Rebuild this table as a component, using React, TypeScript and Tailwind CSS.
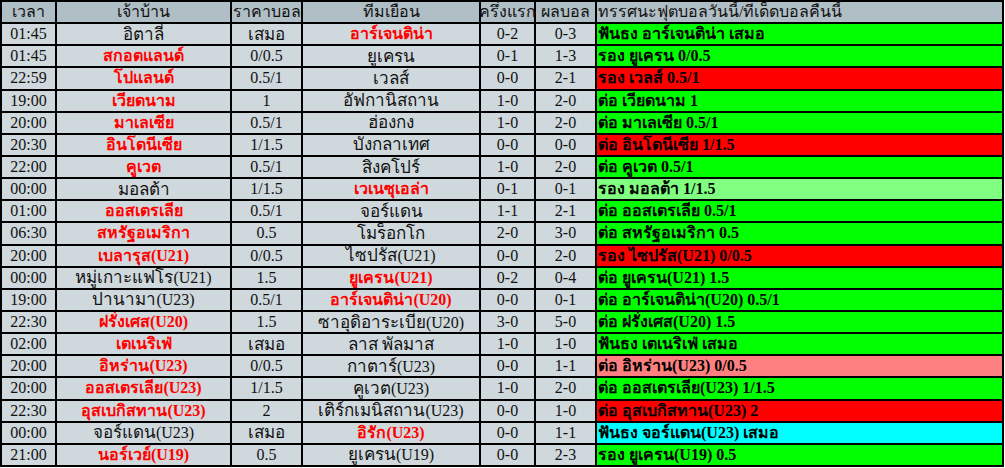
type Row = {
  time: string;
  home: string;
  homeRed?: boolean;
  odds: string;
  away: string;
  awayRed?: boolean;
  half: string;
  full: string;
  tip: string;
  tone: "green" | "red" | "lime" | "pink" | "cyan";
};

const rows: Row[] = [
  { time: "01:45", home: "อิตาลี่", odds: "เสมอ", away: "อาร์เจนติน่า", awayRed: true, half: "0-2", full: "0-3", tip: "ฟันธง อาร์เจนติน่า เสมอ", tone: "green" },
  { time: "01:45", home: "สกอตแลนด์", homeRed: true, odds: "0/0.5", away: "ยูเครน", half: "0-1", full: "1-3", tip: "รอง ยูเครน 0/0.5", tone: "green" },
  { time: "22:59", home: "โปแลนด์", homeRed: true, odds: "0.5/1", away: "เวลส์", half: "0-0", full: "2-1", tip: "รอง เวลส์ 0.5/1", tone: "red" },
  { time: "19:00", home: "เวียดนาม", homeRed: true, odds: "1", away: "อัฟกานิสถาน", half: "1-0", full: "2-0", tip: "ต่อ เวียดนาม 1", tone: "green" },
  { time: "20:00", home: "มาเลเซีย", homeRed: true, odds: "0.5/1", away: "ฮ่องกง", half: "1-0", full: "2-0", tip: "ต่อ มาเลเซีย 0.5/1", tone: "green" },
  { time: "20:30", home: "อินโดนีเซีย", homeRed: true, odds: "1/1.5", away: "บังกลาเทศ", half: "0-0", full: "0-0", tip: "ต่อ อินโดนีเซีย 1/1.5", tone: "red" },
  { time: "22:00", home: "คูเวต", homeRed: true, odds: "0.5/1", away: "สิงคโปร์", half: "1-0", full: "2-0", tip: "ต่อ คูเวต 0.5/1", tone: "green" },
  { time: "00:00", home: "มอลต้า", odds: "1/1.5", away: "เวเนซุเอล่า", awayRed: true, half: "0-1", full: "0-1", tip: "รอง มอลต้า 1/1.5", tone: "lime" },
  { time: "01:00", home: "ออสเตรเลีย", homeRed: true, odds: "0.5/1", away: "จอร์แดน", half: "1-1", full: "2-1", tip: "ต่อ ออสเตรเลีย 0.5/1", tone: "green" },
  { time: "06:30", home: "สหรัฐอเมริกา", homeRed: true, odds: "0.5", away: "โมร็อกโก", half: "2-0", full: "3-0", tip: "ต่อ สหรัฐอเมริกา 0.5", tone: "green" },
  { time: "20:00", home: "เบลารุส(U21)", homeRed: true, odds: "0/0.5", away: "ไซปรัส(U21)", half: "0-0", full: "2-0", tip: "รอง ไซปรัส(U21) 0/0.5", tone: "red" },
  { time: "00:00", home: "หมู่เกาะแฟโร(U21)", odds: "1.5", away: "ยูเครน(U21)", awayRed: true, half: "0-2", full: "0-4", tip: "ต่อ ยูเครน(U21) 1.5", tone: "green" },
  { time: "19:00", home: "ปานามา(U23)", odds: "0.5/1", away: "อาร์เจนติน่า(U20)", awayRed: true, half: "0-0", full: "0-1", tip: "ต่อ อาร์เจนติน่า(U20) 0.5/1", tone: "green" },
  { time: "22:30", home: "ฝรั่งเศส(U20)", homeRed: true, odds: "1.5", away: "ซาอุดิอาระเบีย(U20)", half: "3-0", full: "5-0", tip: "ต่อ ฝรั่งเศส(U20) 1.5", tone: "green" },
  { time: "02:00", home: "เตเนริเฟ่", homeRed: true, odds: "เสมอ", away: "ลาส พัลมาส", half: "1-0", full: "1-0", tip: "ฟันธง เตเนริเฟ่ เสมอ", tone: "green" },
  { time: "20:00", home: "อิหร่าน(U23)", homeRed: true, odds: "0/0.5", away: "กาตาร์(U23)", half: "0-0", full: "1-1", tip: "ต่อ อิหร่าน(U23) 0/0.5", tone: "pink" },
  { time: "20:00", home: "ออสเตรเลีย(U23)", homeRed: true, odds: "1/1.5", away: "คูเวต(U23)", half: "1-0", full: "2-0", tip: "ต่อ ออสเตรเลีย(U23) 1/1.5", tone: "green" },
  { time: "22:30", home: "อุสเบกิสทาน(U23)", homeRed: true, odds: "2", away: "เติร์กเมนิสถาน(U23)", half: "0-0", full: "1-0", tip: "ต่อ อุสเบกิสทาน(U23) 2", tone: "red" },
  { time: "00:00", home: "จอร์แดน(U23)", odds: "เสมอ", away: "อิรัก(U23)", awayRed: true, half: "0-0", full: "1-1", tip: "ฟันธง จอร์แดน(U23) เสมอ", tone: "cyan" },
  { time: "21:00", home: "นอร์เวย์(U19)", homeRed: true, odds: "0.5", away: "ยูเครน(U19)", half: "0-0", full: "2-3", tip: "รอง ยูเครน(U19) 0.5", tone: "green" },
];

const toneBg = {
  green: "bg-[#00ff00]",
  red: "bg-[#ff0000]",
  lime: "bg-[#80ff80]",
  pink: "bg-[#ff8080]",
  cyan: "bg-[#00ffff]",
};

const headers = ["เวลา", "เจ้าบ้าน", "ราคาบอล", "ทีมเยือน", "ครึ่งแรก", "ผลบอล", "ทรรศนะฟุตบอลวันนี้/ทีเด็ดบอลคืนนี้"];

// regular-weight thai comes out narrow next to the serif digits, so bump those runs
function Txt({ s, big }: { s: string; big?: boolean }) {
  if (!big) return <>{s}</>;
  const parts = s.split(/([\u0E00-\u0E7F]+)/).filter(Boolean);
  return (
    <>
      {parts.map((p, i) =>
        /[\u0E00-\u0E7F]/.test(p) ? (
          <span key={i} className="text-[17px]">
            {p}
          </span>
        ) : (
          <span key={i}>{p}</span>
        )
      )}
    </>
  );
}

function Cell({ children, className = "" }: { children: React.ReactNode; className?: string }) {
  return (
    <div className={`flex items-center justify-center overflow-hidden whitespace-nowrap bg-[#cfd8dc] ${className}`}>
      <span>{children}</span>
    </div>
  );
}

function Team({ name, red }: { name: string; red?: boolean }) {
  return (
    <Cell className={red ? "font-bold text-[#ff0000]" : "text-[#111]"}>
      <Txt s={name} big={!red} />
    </Cell>
  );
}

export default function App() {
  return (
    <div className="bg-white w-[1005px] h-[468px] font-['Liberation_Serif',serif] text-[16px] leading-none">
      <div className="grid w-[1004px] grid-cols-[53px_173px_69px_176px_53px_59px_1fr] auto-rows-[20.15px] gap-[2px] bg-black p-[2px]">
        {headers.map((h, i) => (
          <div
            key={h}
            className={`flex items-center whitespace-nowrap bg-[#b0bec5] text-[#111] ${i === 6 ? "justify-start pl-[1px]" : "justify-center"}`}
          >
            {h}
          </div>
        ))}
        {rows.map((r, i) => (
          <div key={i} className="contents">
            <Cell className="text-[#111]">{r.time}</Cell>
            <Team name={r.home} red={r.homeRed} />
            <Cell className="text-[#111]">
              <Txt s={r.odds} big />
            </Cell>
            <Team name={r.away} red={r.awayRed} />
            <Cell className="text-[#111]">{r.half}</Cell>
            <Cell className="text-[#111]">{r.full}</Cell>
            <div className={`flex items-center whitespace-nowrap pl-[1px] font-bold text-black ${toneBg[r.tone]}`}>
              {r.tip}
            </div>
          </div>
        ))}
      </div>
    </div>
  );
}
